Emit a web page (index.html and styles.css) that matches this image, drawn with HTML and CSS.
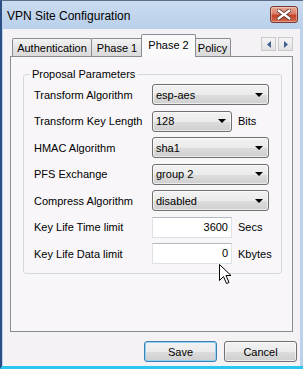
FILE: index.html
```html
<!DOCTYPE html>
<html>
<head>
<meta charset="utf-8">
<link rel="stylesheet" href="styles.css">
</head>
<body>
<div class="window">
  <div class="titlebar">
    <span class="title">VPN Site Configuration</span>
    <div class="close">
      <svg width="14" height="11" viewBox="0 0 14 11"><path d="M1.5 1.5 L12.5 9.5 M12.5 1.5 L1.5 9.5" stroke="#5a2a22" stroke-width="4" stroke-linecap="round"/><path d="M1.5 1.5 L12.5 9.5 M12.5 1.5 L1.5 9.5" stroke="#ffffff" stroke-width="2.2" stroke-linecap="round"/></svg>
    </div>
  </div>
  <div class="client">
    <div class="tabstrip">
      <div class="tab t-auth">Authentication</div>
      <div class="tab t-p1">Phase 1</div>
      <div class="tab t-p2 active">Phase 2</div>
      <div class="tab t-pol">Policy</div>
      <div class="scrollers">
        <div class="sbtn"><svg width="4" height="7" viewBox="0 0 4 7"><path d="M4 0 L0 3.5 L4 7 Z" fill="#3f5f8f"/></svg></div>
        <div class="sbtn"><svg width="4" height="7" viewBox="0 0 4 7"><path d="M0 0 L4 3.5 L0 7 Z" fill="#3f5f8f"/></svg></div>
      </div>
    </div>
    <div class="panel">
      <div class="group">
        <div class="legend">Proposal Parameters</div>
        <div class="rows">
          <div class="row"><span class="label">Transform Algorithm</span><div class="combo wide"><span>esp-aes</span><i class="arrow"></i></div></div>
          <div class="row"><span class="label">Transform Key Length</span><div class="combo narrow"><span>128</span><i class="arrow"></i></div><span class="unit">Bits</span></div>
          <div class="row"><span class="label">HMAC Algorithm</span><div class="combo wide"><span>sha1</span><i class="arrow"></i></div></div>
          <div class="row"><span class="label">PFS Exchange</span><div class="combo wide"><span>group 2</span><i class="arrow"></i></div></div>
          <div class="row"><span class="label">Compress Algorithm</span><div class="combo wide"><span>disabled</span><i class="arrow"></i></div></div>
          <div class="row"><span class="label">Key Life Time limit</span><div class="edit">3600</div><span class="unit">Secs</span></div>
          <div class="row"><span class="label">Key Life Data limit</span><div class="edit">0</div><span class="unit">Kbytes</span></div>
        </div>
      </div>
    </div>
    <div class="buttons">
      <div class="btn default">Save</div>
      <div class="btn">Cancel</div>
    </div>
    <svg class="cursor" width="13" height="21" viewBox="0 0 13 21"><path d="M0.5 0.5 L0.5 16.5 L4.5 12.5 L7.5 19.5 L10 18.5 L7 11.5 L12 11.5 Z" fill="#ffffff" stroke="#000000" stroke-width="1"/></svg>
  </div>
</div>
</body>
</html>
```
FILE: styles.css
```css
* { box-sizing: border-box; }
html, body { margin: 0; padding: 0; }
body {
  width: 303px;
  height: 369px;
  overflow: hidden;
  font-family: "Liberation Sans", Arial, sans-serif;
  font-size: 11px;
  color: #000;
}
.window {
  width: 303px;
  height: 369px;
  background: #bcd2ec;
  border-top: 1px solid #5b6e86;
  border-left: 2px solid #2a4f86;
  border-bottom: 3px solid #29c6ef;
  display: flex;
  flex-direction: column;
}
.titlebar {
  height: 28px;
  flex: none;
  display: flex;
  align-items: flex-start;
  justify-content: space-between;
  padding: 0 5px 0 5px;
  background: linear-gradient(#c9dbf0, #bad0ea);
}
.title {
  font-size: 12px;
  margin-top: 8px;
  color: #000;
}
.close {
  width: 28px;
  height: 17px;
  margin-top: 5px;
  border: 1px solid #7a3a30;
  border-radius: 3px;
  background: linear-gradient(#e9a795 0%, #d9806a 45%, #c5452b 55%, #d2674d 100%);
  display: flex;
  align-items: center;
  justify-content: center;
  box-shadow: inset 0 0 0 1px rgba(255,255,255,0.35);
}
.client {
  flex: 1;
  position: relative;
  margin-left: 1px;
  margin-right: 3px;
  background: #f5f2f5;
  padding: 4px 0 0 7px;
  display: flex;
  flex-direction: column;
}
.tabstrip {
  height: 23px;
  display: flex;
  align-items: flex-end;
  padding-left: 2px;
  width: 283px;
  position: relative;
  z-index: 1;
}
.tab {
  height: 18px;
  border: 1px solid #898c95;
  border-bottom: none;
  border-radius: 2px 2px 0 0;
  background: linear-gradient(#f3f3f3, #e3e3e3 55%, #dadada);
  display: flex;
  align-items: center;
  justify-content: center;
  padding-top: 1px;
  margin-right: -1px;
}
.t-auth { width: 80px; }
.t-p1 { width: 52px; }
.t-pol { width: 37px; }
.tab.active {
  width: 55px;
  height: 23px;
  margin-left: -1px;
  margin-right: -2px;
  margin-bottom: -1px;
  background: #fbfafb;
  padding-top: 0;
  padding-bottom: 3px;
  position: relative;
  z-index: 2;
}
.scrollers {
  margin-left: auto;
  align-self: flex-start;
  margin-top: 4px;
  display: flex;
  gap: 2px;
  margin-right: 0;
}
.sbtn {
  width: 15px;
  height: 14px;
  border: 1px solid #c9c9c9;
  background: linear-gradient(#f4f4f4, #e2e2e2);
  display: flex;
  align-items: center;
  justify-content: center;
}
.panel {
  width: 283px;
  height: 276px;
  border: 1px solid #898c95;
  background: #f8f6f8;
  padding: 17px 10px 0 12px;
}
.group {
  height: 200px;
  border: 1px solid #d5d9df;
  border-radius: 3px;
}
.legend {
  width: max-content;
  height: 13px;
  line-height: 13px;
  margin: -7px 0 0 6px;
  padding: 0 2px;
  background: #f8f6f8;
}
.rows {
  padding: 3px 0 0 10px;
  display: flex;
  flex-direction: column;
  gap: 5.5px;
}
.row {
  height: 21px;
  display: flex;
  align-items: center;
}
.label {
  width: 118px;
  flex: none;
}
.combo {
  height: 21px;
  border: 1px solid #707070;
  border-radius: 3px;
  background: linear-gradient(#f2f2f2 0%, #ebebeb 50%, #dddddd 51%, #cfcfcf 100%);
  display: flex;
  align-items: center;
  padding-left: 3px;
  padding-right: 5px;
  box-shadow: inset 0 0 0 1px rgba(255,255,255,0.6);
}
.combo span { flex: 1; }
.combo.wide { width: 117px; }
.combo.narrow { width: 80px; }
.arrow {
  width: 0;
  height: 0;
  border-left: 4px solid transparent;
  border-right: 4px solid transparent;
  border-top: 4px solid #000;
}
.unit { margin-left: 6px; }
.edit {
  width: 80px;
  height: 21px;
  border: 1px solid #dde2e8;
  border-top-color: #b5b9c0;
  background: #fff;
  text-align: right;
  padding-right: 3px;
  line-height: 19px;
}
.buttons {
  display: flex;
  justify-content: flex-end;
  gap: 7px;
  padding: 9px 3px 0 0;
}
.btn {
  width: 73px;
  height: 21px;
  border: 1px solid #707070;
  border-radius: 3px;
  background: linear-gradient(#f2f2f2 0%, #ebebeb 50%, #dddddd 51%, #cfcfcf 100%);
  display: flex;
  align-items: center;
  justify-content: center;
  box-shadow: inset 0 0 0 1px rgba(255,255,255,0.6);
}
.btn.default {
  border-color: #3c7fb1;
  box-shadow: inset 0 0 0 1px #8fd3f5;
}
.cursor {
  position: absolute;
  left: 216px;
  top: 235px;
}
```
